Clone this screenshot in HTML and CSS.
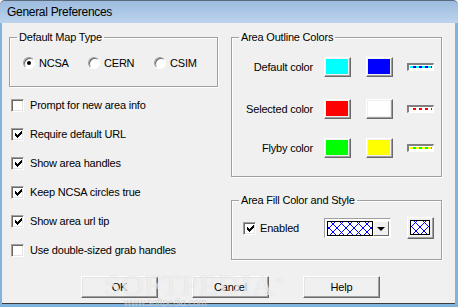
FILE: index.html
```html
<!DOCTYPE html>
<html lang="en">
<head>
    <meta charset="UTF-8">
    <title>General Preferences</title>
    <link rel="stylesheet" href="styles.css">
</head>
<body>

    <div class="window">
        <div class="titlebar">General Preferences</div>
        <div class="client">
            <div class="columns">
                <div class="col-left">
                    <fieldset class="group">
                        <legend>Default Map Type</legend>
                        <div class="radios">
                            <label class="radio"><span class="dot checked"></span>NCSA</label>
                            <label class="radio"><span class="dot"></span>CERN</label>
                            <label class="radio"><span class="dot"></span>CSIM</label>
                        </div>
                    </fieldset>

                    <div class="checks">
                        <label class="check"><span class="box"></span>Prompt for new area info</label>
                        <label class="check"><span class="box"><svg class="tick" viewBox="0 0 7 7"><path d="M6 0h1v1h-1zM5 1h2v1h-2zM0 2h1v1h-1zM4 2h3v1h-3zM0 3h2v1h-2zM3 3h3v1h-3zM0 4h5v1h-5zM1 5h3v1h-3zM2 6h1v1h-1z"/></svg></span>Require default URL</label>
                        <label class="check"><span class="box"><svg class="tick" viewBox="0 0 7 7"><path d="M6 0h1v1h-1zM5 1h2v1h-2zM0 2h1v1h-1zM4 2h3v1h-3zM0 3h2v1h-2zM3 3h3v1h-3zM0 4h5v1h-5zM1 5h3v1h-3zM2 6h1v1h-1z"/></svg></span>Show area handles</label>
                        <label class="check"><span class="box"><svg class="tick" viewBox="0 0 7 7"><path d="M6 0h1v1h-1zM5 1h2v1h-2zM0 2h1v1h-1zM4 2h3v1h-3zM0 3h2v1h-2zM3 3h3v1h-3zM0 4h5v1h-5zM1 5h3v1h-3zM2 6h1v1h-1z"/></svg></span>Keep NCSA circles true</label>
                        <label class="check"><span class="box"><svg class="tick" viewBox="0 0 7 7"><path d="M6 0h1v1h-1zM5 1h2v1h-2zM0 2h1v1h-1zM4 2h3v1h-3zM0 3h2v1h-2zM3 3h3v1h-3zM0 4h5v1h-5zM1 5h3v1h-3zM2 6h1v1h-1z"/></svg></span>Show area url tip</label>
                        <label class="check"><span class="box"></span>Use double-sized grab handles</label>
                    </div>
                </div>

                <div class="col-right">
                    <fieldset class="group">
                        <legend>Area Outline Colors</legend>
                        <div class="color-rows">
                            <div class="color-row">
                                <span class="row-label">Default color</span>
                                <span class="swatch"><span class="fill cyan"></span></span>
                                <span class="swatch"><span class="fill blue"></span></span>
                                <span class="line"><span class="dash dash-default"></span></span>
                            </div>
                            <div class="color-row second">
                                <span class="row-label">Selected color</span>
                                <span class="swatch"><span class="fill red"></span></span>
                                <span class="swatch"><span class="fill white"></span></span>
                                <span class="line"><span class="dash dash-selected"></span></span>
                            </div>
                            <div class="color-row third">
                                <span class="row-label">Flyby color</span>
                                <span class="swatch"><span class="fill green"></span></span>
                                <span class="swatch"><span class="fill yellow"></span></span>
                                <span class="line"><span class="dash dash-flyby"></span></span>
                            </div>
                        </div>
                    </fieldset>

                    <fieldset class="group fill-group">
                        <legend>Area Fill Color and Style</legend>
                        <div class="fill-row">
                            <label class="check"><span class="box"><svg class="tick" viewBox="0 0 7 7"><path d="M6 0h1v1h-1zM5 1h2v1h-2zM0 2h1v1h-1zM4 2h3v1h-3zM0 3h2v1h-2zM3 3h3v1h-3zM0 4h5v1h-5zM1 5h3v1h-3zM2 6h1v1h-1z"/></svg></span>Enabled</label>
                            <div class="combo">
                                <span class="hatch"></span>
                                <span class="drop"><span class="arrow"></span></span>
                            </div>
                            <span class="pattern-btn"><span class="hatch"></span></span>
                        </div>
                    </fieldset>
                </div>
            </div>

            <div class="actions">
                <button>OK</button>
                <button>Cancel</button>
                <button>Help</button>
            </div>
        </div>

        <div class="watermark">SOFTPEDIA<sup>™</sup></div>
        <div class="watermark-url">www.softpedia.com</div>
    </div>

</body>
</html>
```

FILE: styles.css
```css
* {
    box-sizing: border-box;
}
body {
    margin: 0;
    font-family: "Liberation Sans", Arial, sans-serif;
    font-size: 11px;
    letter-spacing: -0.2px;
    color: #000;
    background: #f0f0f0;
}
.window {
    position: relative;
    width: 458px;
    height: 307px;
    background: #f0f0f0;
    overflow: hidden;
}
.titlebar {
    height: 23px;
    padding-left: 7px;
    line-height: 22px;
    font-size: 12px;
    letter-spacing: -0.3px;
    border-top: 1px solid #5b6b7c;
    border-radius: 5px 5px 0 0;
    background: linear-gradient(#9dbce0, #bcd3ec);
}
.client {
    height: 284px;
    padding: 7px 13px 0 7px;
    border-left: 2px solid #7fb4df;
    border-right: 3px solid #7fb4df;
    border-bottom: 3px solid #7fb4df;
    box-shadow: inset 0 -1px 0 #3c3c3c;
}
.columns {
    display: flex;
    gap: 13px;
}
.col-left {
    width: 209px;
}
.col-right {
    flex: 1;
}

/* group boxes */
.group {
    margin: 0;
    padding: 0;
    min-width: 0;
    border: 1px solid #a0a0a0;
    box-shadow: 1px 1px 0 #fff, inset 1px 1px 0 #fff;
}
.group legend {
    margin-left: 7px;
    padding: 0 2px;
    line-height: 14px;
}

/* radios */
.radios {
    display: grid;
    grid-template-columns: 65px 66px auto;
    padding: 12px 0 16px 13px;
}
.radio {
    display: flex;
    align-items: center;
    gap: 4px;
    height: 14px;
}
.dot {
    position: relative;
    width: 12px;
    height: 12px;
    border-radius: 50%;
    border: 1px solid;
    border-color: #a0a0a0 #fff #fff #a0a0a0;
    background: #fff;
    box-shadow: inset 1px 1px 0 #696969;
}
.dot.checked::after {
    content: "";
    position: absolute;
    left: 3px;
    top: 3px;
    width: 4px;
    height: 4px;
    border-radius: 50%;
    background: #000;
}

/* checkboxes */
.checks {
    display: flex;
    flex-direction: column;
    gap: 15px;
    padding: 11px 0 0 2px;
}
.check {
    display: flex;
    align-items: center;
    gap: 6px;
    height: 14px;
}
.box {
    display: flex;
    align-items: center;
    justify-content: center;
    width: 13px;
    height: 13px;
    border: 1px solid;
    border-color: #a0a0a0 #fff #fff #a0a0a0;
    background: #fff;
    box-shadow: inset 1px 1px 0 #696969, inset -1px -1px 0 #e3e3e3;
}
.tick {
    width: 7px;
    height: 7px;
    margin: 1px 0 0 1px;
    shape-rendering: crispEdges;
}

/* outline colours */
.color-rows {
    display: flex;
    flex-direction: column;
    padding: 13px 7px 18px 0;
}
.color-row {
    display: flex;
    align-items: center;
    height: 20px;
}
.color-row.second {
    margin-top: 22px;
}
.color-row.third {
    margin-top: 19px;
}
.row-label {
    flex: 1;
    text-align: right;
}
.swatch {
    width: 27px;
    height: 20px;
    margin-left: 11px;
    padding: 1px 2px 2px 1px;
    border: 1px solid;
    border-color: #fff #696969 #696969 #fff;
    box-shadow: inset -1px -1px 0 #a0a0a0;
}
.swatch + .swatch {
    margin-left: 15px;
}
.fill {
    display: block;
    height: 100%;
}
.cyan { background: #00ffff; }
.blue { background: #0000ff; }
.red { background: #ff0000; }
.white { background: #fff; }
.green { background: #00ff00; }
.yellow { background: #ffff00; }
.line {
    width: 27px;
    height: 8px;
    margin-left: 14px;
    padding: 1px 1px 0;
    border-style: solid;
    border-width: 2px 1px 1px 2px;
    border-color: #808080 #fff #fff #808080;
    background: #fff;
}
.dash {
    display: block;
    height: 2px;
}
.dash-default {
    background: repeating-linear-gradient(90deg, #00ffff 0 3px, #0000ff 3px 6px);
}
.dash-selected {
    background: repeating-linear-gradient(90deg, #fff 0 3px, #ff0000 3px 6px);
}
.dash-flyby {
    background: repeating-linear-gradient(90deg, #ffff00 0 3px, #00ff00 3px 6px);
}

/* fill style */
.fill-group {
    margin-top: 16px;
}
.fill-row {
    display: flex;
    align-items: center;
    padding: 10px 7px 20px 11px;
}
.fill-row .check {
    gap: 4px;
}
.combo {
    display: flex;
    width: 67px;
    height: 20px;
    margin-left: auto;
    padding: 2px 1px 1px 2px;
    border: 1px solid;
    border-color: #a0a0a0 #fff #fff #a0a0a0;
    background: #fff;
}
.hatch {
    display: block;
    flex: 1;
    border: 1px solid #000;
    background-color: #fff;
    background-image:
        repeating-linear-gradient(45deg, transparent 0 5px, #0000ff 5px 6px),
        repeating-linear-gradient(-45deg, transparent 0 5px, #0000ff 5px 6px);
}
.drop {
    display: flex;
    align-items: center;
    justify-content: center;
    width: 16px;
    border: 1px solid;
    border-color: #fff #696969 #696969 #fff;
    background: #f0f0f0;
}
.arrow {
    width: 0;
    height: 0;
    border-left: 4px solid transparent;
    border-right: 4px solid transparent;
    border-top: 4px solid #000;
}
.pattern-btn {
    display: flex;
    width: 27px;
    height: 22px;
    margin-left: 16px;
    padding: 2px 3px 3px 2px;
    border: 1px solid;
    border-color: #fff #696969 #696969 #fff;
    box-shadow: inset -1px -1px 0 #a0a0a0;
}

/* dialog buttons */
.actions {
    display: flex;
    gap: 34px;
    margin-top: 16px;
    padding-left: 72px;
}
button {
    width: 77px;
    height: 22px;
    padding: 0;
    font: inherit;
    letter-spacing: inherit;
    color: #000;
    background: #f0f0f0;
    border: 1px solid;
    border-color: #fff #696969 #696969 #fff;
    box-shadow: inset -1px -1px 0 #a0a0a0, inset 1px 1px 0 #e3e3e3;
}

.watermark {
    position: absolute;
    left: 104px;
    top: 268px;
    font-family: "Liberation Serif", serif;
    font-size: 30px;
    letter-spacing: 1px;
    color: rgba(255, 255, 255, 0.6);
    text-shadow: 0 0 1px rgba(180, 180, 180, 0.5);
    pointer-events: none;
}
.watermark sup {
    font-size: 8px;
}
.watermark-url {
    position: absolute;
    left: 124px;
    top: 297px;
    font-size: 10px;
    color: rgba(210, 210, 210, 0.8);
}
```
